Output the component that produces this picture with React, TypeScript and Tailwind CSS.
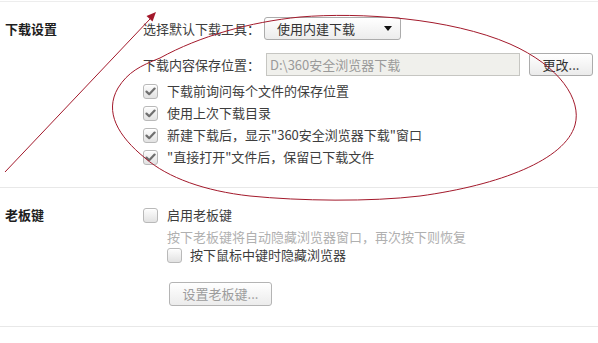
import React from "react";

const FONT = "font-['Noto_Sans_CJK_SC','Noto_Sans',sans-serif]";

function Check({ checked }: { checked: boolean }) {
  return (
    <span className="flex h-[15px] w-[15px] shrink-0 items-center justify-center rounded-[3px] border border-[#b9b9b9] bg-gradient-to-b from-[#fdfdfd] to-[#e2e2e2] shadow-[inset_0_1px_0_#fff]">
      {checked && (
        <svg width="11" height="9" viewBox="0 0 11 9">
          <path d="M1.5 4.6 L4.2 7.2 L9.6 1.6" fill="none" stroke="#6f6f6f" strokeWidth="2.2" strokeLinecap="round" strokeLinejoin="round" />
        </svg>
      )}
    </span>
  );
}

const OPTIONS = [
  "下载前询问每个文件的保存位置",
  "使用上次下载目录",
  "新建下载后，显示\"360安全浏览器下载\"窗口",
  "\"直接打开\"文件后，保留已下载文件",
];

export default function App() {
  return (
    <div className={`relative h-[343px] w-[598px] overflow-hidden bg-white text-[13px] text-[#3d3d3d] ${FONT}`}>
      <div className="mt-px h-px bg-[#ededed]" />

      {/* 下载设置 */}
      <div className="flex pt-[15px]">
        <div className="flex h-[23px] w-[143px] shrink-0 items-center pl-[5px] font-bold text-[#1e1e1e]">下载设置</div>
        <div className="flex flex-col">
          <div className="flex h-[23px] items-center">
            <span className="w-[121px]">选择默认下载工具：</span>
            <div className="flex h-[23px] w-[137px] items-center justify-between rounded-[3px] border border-[#acacac] bg-gradient-to-b from-white to-[#ececec] pl-[12px] pr-[8px] text-[#333]">
              <span>使用内建下载</span>
              <svg width="8" height="5" viewBox="0 0 8 5"><path d="M0 0 H8 L4 5 Z" fill="#111" /></svg>
            </div>
          </div>
          <div className="mt-[13px] flex h-[23px] items-center">
            <span className="w-[123px]">下载内容保存位置：</span>
            <div className="flex h-[23px] w-[254px] items-center border border-[#c6c6c2] bg-[#f0f0ec] pl-[3px] text-[#9a9a9a]">D:\360安全浏览器下载</div>
            <button className="ml-[9px] h-[23px] w-[64px] rounded-[3px] border border-[#acacac] bg-gradient-to-b from-white to-[#ebebeb] text-[#333]">更改...</button>
          </div>
          <ul className="mt-[4px]">
            {OPTIONS.map((o) => (
              <li key={o} className="flex h-[22px] items-center gap-[9px]">
                <Check checked />
                <span>{o}</span>
              </li>
            ))}
          </ul>
        </div>
      </div>

      <div className="mt-[19px] h-px bg-[#e8e8e8]" />

      {/* 老板键 */}
      <div className="flex pt-[16px]">
        <div className="flex h-[22px] w-[143px] shrink-0 items-center pl-[5px] font-bold text-[#1e1e1e]">老板键</div>
        <div className="flex flex-col">
          <div className="flex h-[22px] items-center gap-[9px]">
            <Check checked={false} />
            <span>启用老板键</span>
          </div>
          <div className="ml-[24px] flex flex-col">
            <div className="mt-[1px] flex h-[20px] items-center text-[#b0b0b0]">按下老板键将自动隐藏浏览器窗口，再次按下则恢复</div>
            <div className="flex h-[16px] items-center gap-[8px]">
              <Check checked={false} />
              <span>按下鼠标中键时隐藏浏览器</span>
            </div>
            <button className="mt-[19px] ml-[2px] h-[24px] w-[103px] rounded-[3px] border border-[#b4b4b4] bg-gradient-to-b from-white to-[#ececec] text-[#9c9c9c]">设置老板键...</button>
          </div>
        </div>
      </div>

      <div className="mt-[20px] h-px bg-[#e8e8e8]" />

      {/* red hand-drawn annotations */}
      <svg className="pointer-events-none absolute left-0 top-0" width="598" height="343" viewBox="0 0 598 343">
        <path d="M5 172 L150 19" stroke="#a3192b" strokeWidth="1" fill="none" />
        <path d="M156 12 L152.5 21.5 L146.5 16 Z" fill="#a3192b" />
        <path
          d="M300 17 C360 12, 450 18, 510 44 C560 66, 582 100, 575 125 C565 160, 500 185, 420 196 C370 202, 300 201, 250 196 C205 191, 168 178, 145 158 C118 136, 104 112, 118 88 C128 72, 140 66, 160 58 C200 36, 250 22, 300 17 Z"
          stroke="#a3192b"
          strokeWidth="1"
          fill="none"
        />
      </svg>
    </div>
  );
}
